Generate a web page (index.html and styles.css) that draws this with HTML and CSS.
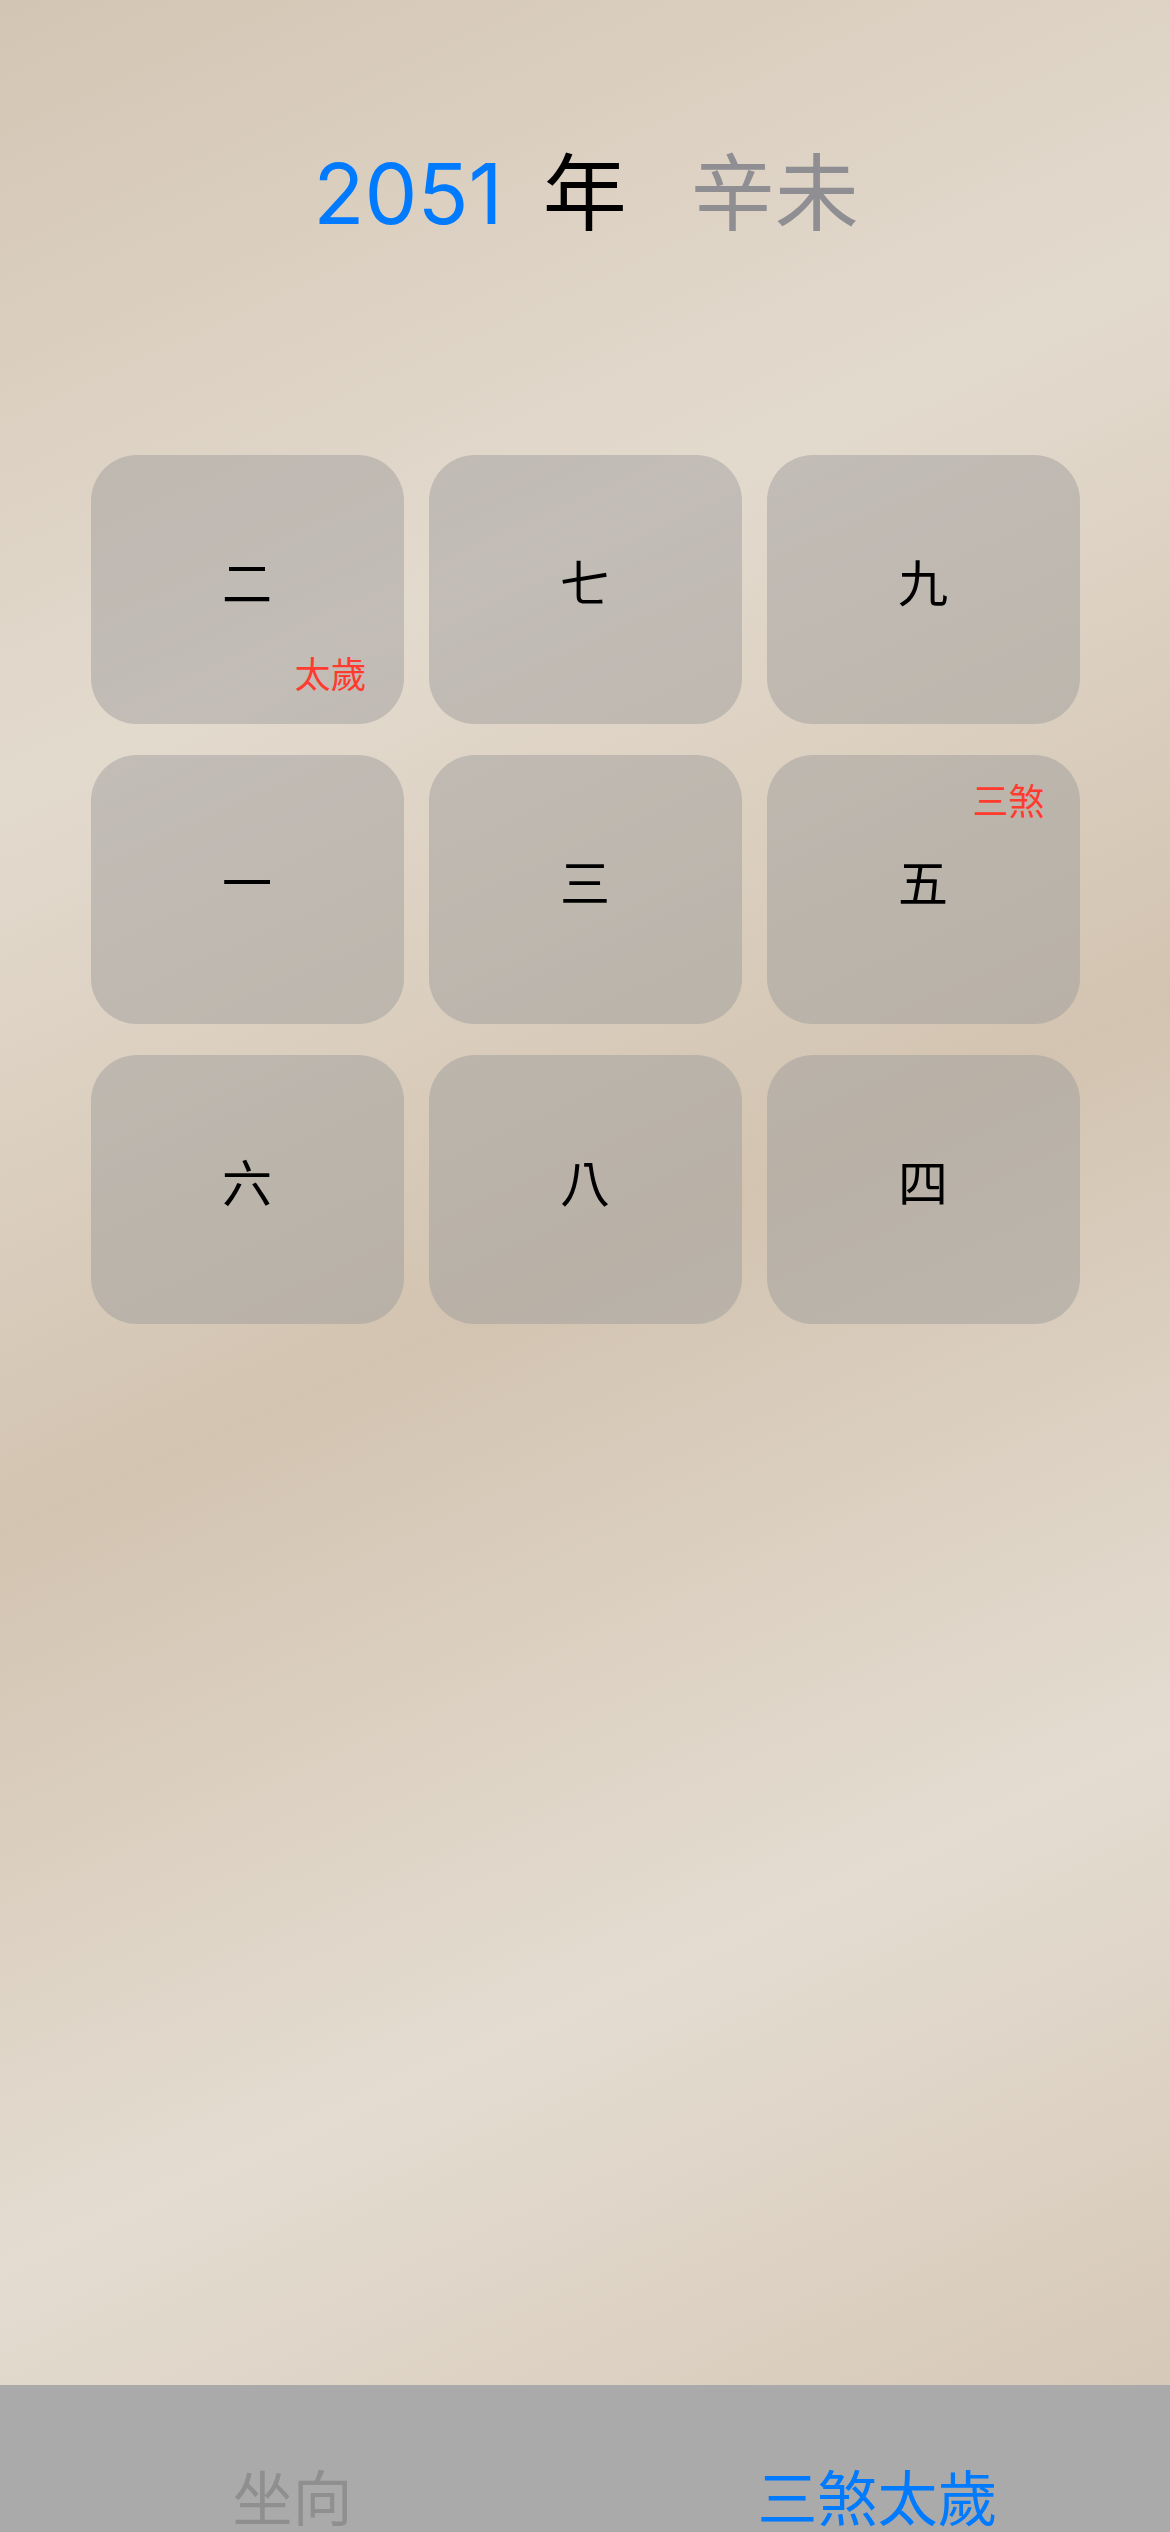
FILE: index.html
```html
<!DOCTYPE html>
<html lang="zh-Hant">
<head>
<meta charset="utf-8">
<title>三煞太歲</title>
<link rel="stylesheet" href="styles.css">
</head>
<body>
<div class="page">
  <header class="title">
    <span class="year">2051</span>
    <span class="nian">年</span>
    <span class="ganzhi">辛未</span>
  </header>

  <main class="grid">
    <div class="cell"><span class="num">二</span><span class="tag tag-bottom">太歲</span></div>
    <div class="cell"><span class="num">七</span></div>
    <div class="cell"><span class="num">九</span></div>
    <div class="cell"><span class="num">一</span></div>
    <div class="cell"><span class="num">三</span></div>
    <div class="cell"><span class="num">五</span><span class="tag tag-top">三煞</span></div>
    <div class="cell"><span class="num">六</span></div>
    <div class="cell"><span class="num">八</span></div>
    <div class="cell"><span class="num">四</span></div>
  </main>

  <nav class="tabbar">
    <div class="tab">坐向</div>
    <div class="tab tab-active">三煞太歲</div>
  </nav>
</div>
</body>
</html>
```

FILE: styles.css
```css
html, body {
  margin: 0;
  padding: 0;
}

body {
  width: 1170px;
  height: 2532px;
  overflow: hidden;
  font-family: "Noto Sans CJK TC", "Noto Sans", sans-serif;
  background: linear-gradient(155.5deg,
    #d3c5b3 0%,
    #e3dace 26%,
    #d3c4b1 50%,
    #e4dcd1 74%,
    #d3c4b2 100%);
}

.page {
  height: 2532px;
  display: flex;
  flex-direction: column;
}

.title {
  display: flex;
  justify-content: center;
  align-items: baseline;
  padding-top: 138px;
  padding-left: 2px;
  font-size: 84px;
  line-height: 100px;
}

.year {
  font-family: Inter, "Noto Sans", sans-serif;
  color: #007aff;
  font-size: 84px;
  margin-right: 40px;
}

.nian {
  color: #000;
  margin-right: 64px;
}

.ganzhi {
  color: #8e8e93;
}

.grid {
  display: grid;
  grid-template-columns: repeat(3, 313px);
  grid-auto-rows: 269px;
  column-gap: 25px;
  row-gap: 31px;
  justify-content: center;
  margin-top: 211px;
}

.cell {
  position: relative;
  display: flex;
  align-items: center;
  justify-content: center;
  border-radius: 46px;
  background: rgba(154, 154, 154, 0.45);
}

.num {
  font-size: 50px;
  line-height: 1;
  color: #000;
  margin-top: -19px;
}

.tag {
  position: absolute;
  font-size: 36px;
  line-height: 1;
  color: #ff3b30;
}

.tag-bottom {
  right: 37px;
  bottom: 34px;
}

.tag-top {
  right: 35px;
  top: 26px;
}

.tabbar {
  margin-top: auto;
  height: 147px;
  background: #aaaaaa;
  display: flex;
  overflow: hidden;
}

.tab {
  flex: 1;
  text-align: center;
  padding-top: 80px;
  font-size: 60px;
  line-height: 1;
  color: #8f8f8f;
}

.tab-active {
  color: #007aff;
}
```
